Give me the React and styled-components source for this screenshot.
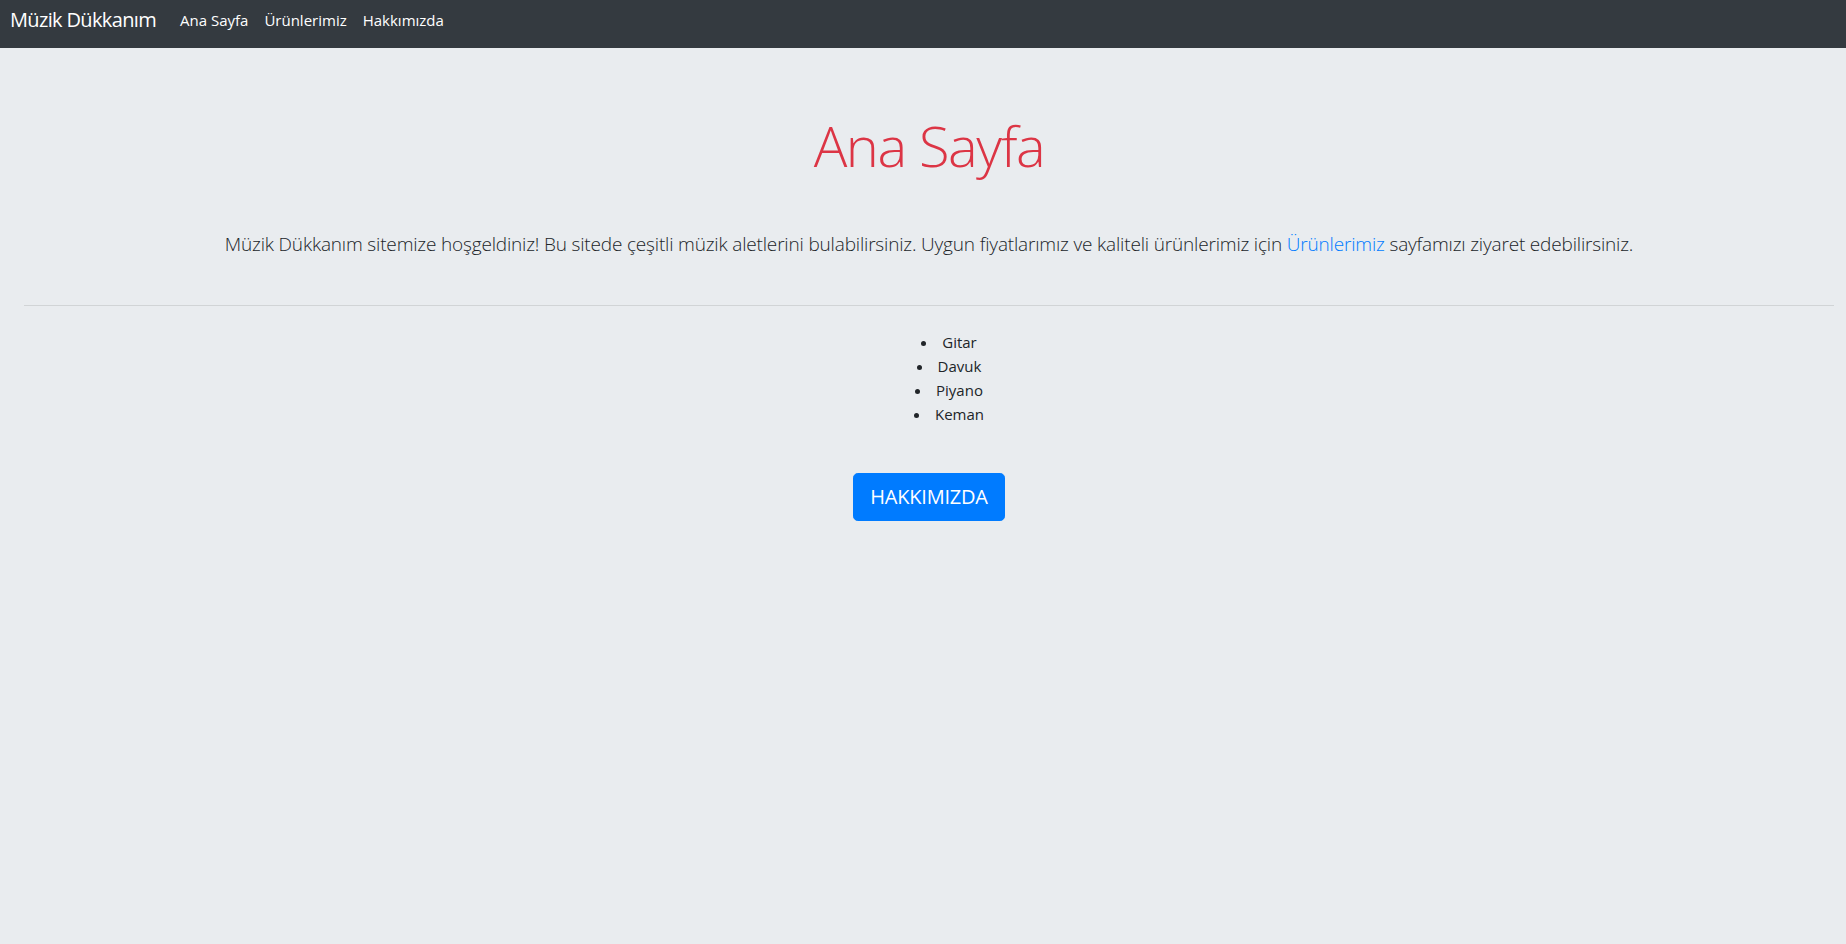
import React from 'react';
import styled, { createGlobalStyle } from 'styled-components';

const GlobalStyle = createGlobalStyle`
  html, body {
    margin: 0;
    padding: 0;
    background-color: #e9ecef;
  }
  body {
    font-family: "Open Sans", "Noto Sans", sans-serif;
    font-size: 16px;
    line-height: 1.5;
    color: #212529;
  }
`;

const Navbar = styled.nav`
  display: flex;
  align-items: flex-start;
  height: 48px;
  box-sizing: border-box;
  padding: 5px 10px 0;
  background-color: #343a40;
`;

const Brand = styled.a`
  font-size: 20px;
  line-height: 30px;
  letter-spacing: -0.65px;
  color: #fff;
  text-decoration: none;
  margin-right: 16px;
`;

const NavList = styled.ul`
  display: flex;
  list-style: none;
  margin: 0;
  padding: 0;
`;

const NavLink = styled.a`
  display: block;
  padding: 0 8px;
  font-size: 15px;
  line-height: 30px;
  color: #fff;
  text-decoration: none;
`;

const Jumbotron = styled.main`
  padding: 64px 12px 64px 24px;
  text-align: center;
`;

const Title = styled.h1`
  margin: 0;
  font-size: 56px;
  font-weight: 300;
  line-height: 1.2;
  letter-spacing: -1.4px;
  color: #dc3545;
`;

const Lead = styled.p`
  margin: 50px 0 0;
  font-size: 19px;
  font-weight: 300;
  line-height: 30px;
  letter-spacing: -0.17px;
  color: #212529;
`;

const Link = styled.a`
  color: #007bff;
  text-decoration: none;
`;

const Divider = styled.hr`
  margin: 46px 0 24px;
  border: 0;
  border-top: 1px solid rgba(0, 0, 0, 0.1);
`;

const Instruments = styled.ul`
  margin: 0;
  padding-left: 40px;
  list-style-position: inside;
  font-size: 15px;
  line-height: 24px;
`;

const Button = styled.button`
  margin-top: 47px;
  padding: 8px 16px;
  font-family: inherit;
  font-size: 20px;
  line-height: 30px;
  letter-spacing: -0.2px;
  color: #fff;
  background-color: #007bff;
  border: 1px solid #007bff;
  border-radius: 4.8px;
  cursor: pointer;
`;

const instruments = ['Gitar', 'Davuk', 'Piyano', 'Keman'];

export default function App() {
  return (
    <>
      <GlobalStyle />
      <Navbar>
        <Brand href="#">Müzik Dükkanım</Brand>
        <NavList>
          <li><NavLink href="#">Ana Sayfa</NavLink></li>
          <li><NavLink href="#">Ürünlerimiz</NavLink></li>
          <li><NavLink href="#">Hakkımızda</NavLink></li>
        </NavList>
      </Navbar>
      <Jumbotron>
        <Title>Ana Sayfa</Title>
        <Lead>
          Müzik Dükkanım sitemize hoşgeldiniz! Bu sitede çeşitli müzik aletlerini bulabilirsiniz. Uygun
          fiyatlarımız ve kaliteli ürünlerimiz için <Link href="#">Ürünlerimiz</Link> sayfamızı ziyaret
          edebilirsiniz.
        </Lead>
        <Divider />
        <Instruments>
          {instruments.map((name) => (
            <li key={name}>{name}</li>
          ))}
        </Instruments>
        <Button>HAKKIMIZDA</Button>
      </Jumbotron>
    </>
  );
}
